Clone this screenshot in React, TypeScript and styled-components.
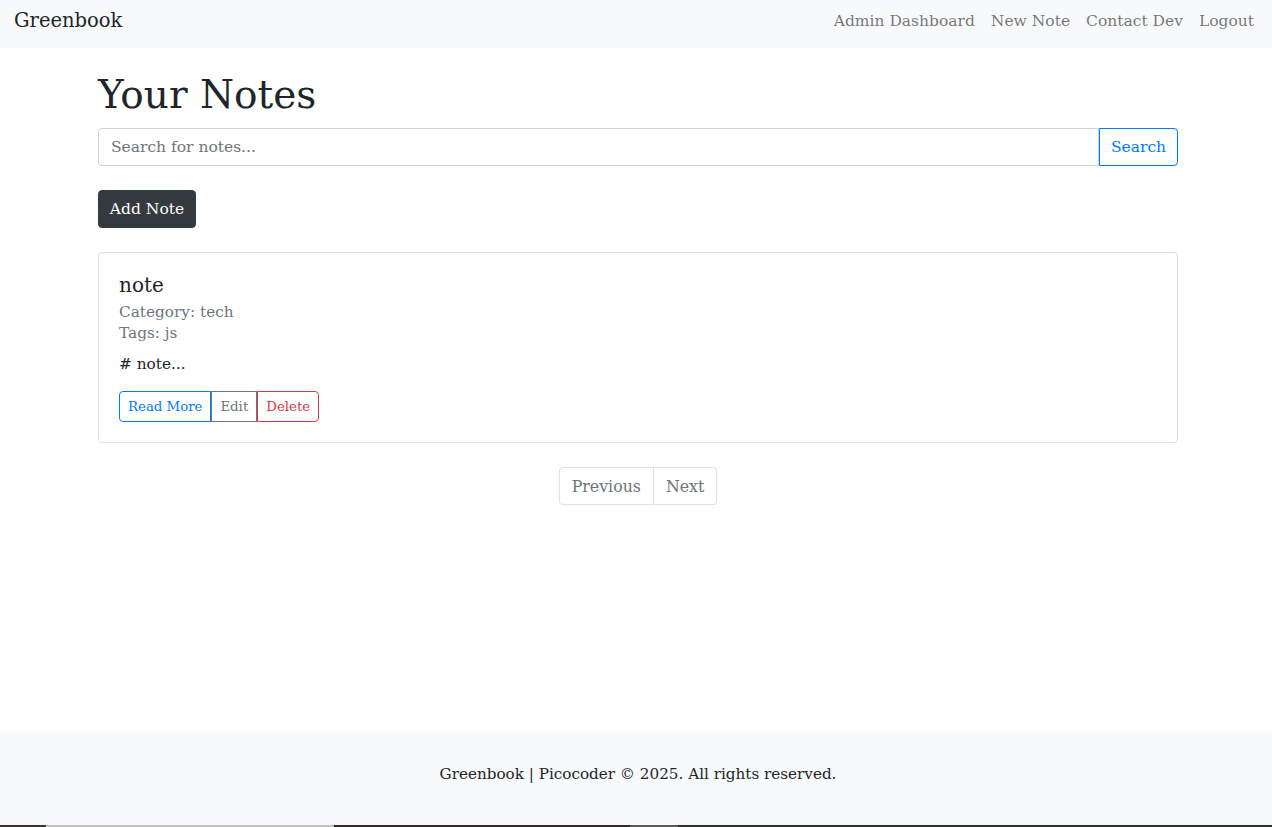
import React from "react";
import styled, { createGlobalStyle } from "styled-components";

const GlobalStyle = createGlobalStyle`
    * { box-sizing: border-box; }
    body {
        margin: 0;
        font-family: "DejaVu Serif", "Liberation Serif", serif;
        font-size: 16px;
        color: #212529;
        background: #fff;
    }
`;

const notes = [
    { id: 1, title: "note", category: "tech", tags: "js", preview: "# note..." },
];

const App = () => {
    return (
        <>
            <GlobalStyle />
            <StyledPage>
                <StyledNavbar>
                    <StyledBrand href="#">Greenbook</StyledBrand>
                    <StyledNavLinks>
                        <StyledNavLink href="#">Admin Dashboard</StyledNavLink>
                        <StyledNavLink href="#">New Note</StyledNavLink>
                        <StyledNavLink href="#">Contact Dev</StyledNavLink>
                        <StyledNavLink href="#">Logout</StyledNavLink>
                    </StyledNavLinks>
                </StyledNavbar>

                <StyledMain>
                    <StyledContainer>
                        <StyledTitle>Your Notes</StyledTitle>
                        <StyledSearch>
                            <StyledSearchInput placeholder="Search for notes..." />
                            <StyledSearchButton>Search</StyledSearchButton>
                        </StyledSearch>

                        <StyledAddButton>Add Note</StyledAddButton>

                        {notes.map((note) => (
                            <StyledCard key={note.id}>
                                <StyledCardTitle>{note.title}</StyledCardTitle>
                                <StyledMeta>Category: {note.category}</StyledMeta>
                                <StyledMeta>Tags: {note.tags}</StyledMeta>
                                <StyledPreview>{note.preview}</StyledPreview>
                                <StyledButtonGroup>
                                    <StyledSmallButton $color="#007bff">Read More</StyledSmallButton>
                                    <StyledSmallButton $color="#6c757d">Edit</StyledSmallButton>
                                    <StyledSmallButton $color="#dc3545">Delete</StyledSmallButton>
                                </StyledButtonGroup>
                            </StyledCard>
                        ))}

                        <StyledPagination>
                            <StyledPageLink>Previous</StyledPageLink>
                            <StyledPageLink>Next</StyledPageLink>
                        </StyledPagination>
                    </StyledContainer>
                </StyledMain>

                <StyledFooter>Greenbook | Picocoder © 2025. All rights reserved.</StyledFooter>
                <StyledStrip>
                    <StyledStripPart $w={46} $bg="#3a3431" />
                    <StyledStripPart $w={288} $bg="#c2c2c2" />
                    <StyledStripPart $w={296} $bg="#302a28" />
                    <StyledStripPart $w={48} $bg="#5c5a58" />
                    <StyledStripPart $w={594} $bg="#2f3325" />
                </StyledStrip>
            </StyledPage>
        </>
    );
};

const StyledPage = styled.div`
    display: flex;
    flex-direction: column;
    min-height: 100vh;
`;

const StyledNavbar = styled.nav`
    height: 48px;
    background: #f8f9fa;
    display: flex;
    align-items: center;
    justify-content: space-between;
    padding: 0 18px 7px 14px;
`;

const StyledBrand = styled.a`
    font-size: 19.5px;
    color: #212529;
    text-decoration: none;
`;

const StyledNavLinks = styled.div`
    display: flex;
    gap: 16px;
    padding-top: 1px;
`;

const StyledNavLink = styled.a`
    font-size: 15.5px;
    color: rgba(0, 0, 0, 0.55);
    text-decoration: none;
`;

const StyledMain = styled.main`
    flex: 1;
    padding-left: 4px;
`;

const StyledContainer = styled.div`
    width: 1080px;
    margin: 0 auto;
    padding-bottom: 24px;
`;

const StyledTitle = styled.h1`
    font-size: 39px;
    font-weight: 400;
    line-height: 48px;
    margin: 23px 0 9px;
`;

const StyledSearch = styled.div`
    display: flex;
    height: 38px;
`;

const StyledSearchInput = styled.input`
    flex: 1;
    font-family: inherit;
    font-size: 15.5px;
    padding: 0 12px;
    border: 1px solid #ced4da;
    border-radius: 4px 0 0 4px;
    color: #495057;
    outline: none;
    &::placeholder {
        color: #6c757d;
    }
`;

const StyledSearchButton = styled.button`
    font-family: inherit;
    font-size: 15.5px;
    width: 79px;
    color: #007bff;
    background: #fff;
    border: 1px solid #007bff;
    border-radius: 0 4px 4px 0;
`;

const StyledAddButton = styled.button`
    display: block;
    margin: 24px 0;
    height: 38px;
    width: 98px;
    font-family: inherit;
    font-size: 15.5px;
    color: #fff;
    background: #343a40;
    border: 1px solid #343a40;
    border-radius: 4px;
`;

const StyledCard = styled.div`
    border: 1px solid rgba(0, 0, 0, 0.125);
    border-radius: 4px;
    padding: 20px;
`;

const StyledCardTitle = styled.h5`
    font-size: 20px;
    font-weight: 400;
    line-height: 24px;
    margin: 0 0 5px;
`;

const StyledMeta = styled.div`
    font-size: 15.3px;
    line-height: 21px;
    color: #6c757d;
`;

const StyledPreview = styled.p`
    font-size: 15.3px;
    line-height: 24px;
    margin: 8px 0 15px;
`;

const StyledButtonGroup = styled.div`
    display: flex;
`;

const StyledSmallButton = styled.button<{ $color: string }>`
    height: 31px;
    padding: 0 8px;
    font-family: inherit;
    font-size: 13.3px;
    color: ${({ $color }) => $color};
    background: #fff;
    border: 1px solid ${({ $color }) => $color};
    border-radius: 0;
    &:first-child {
        border-radius: 4px 0 0 4px;
    }
    &:last-child {
        border-radius: 0 4px 4px 0;
    }
`;

const StyledPagination = styled.div`
    display: flex;
    justify-content: center;
    margin-top: 24px;
`;

const StyledPageLink = styled.a`
    height: 38px;
    padding: 0 12px;
    display: flex;
    align-items: center;
    font-size: 15.8px;
    color: #6c757d;
    border: 1px solid #dee2e6;
    &:first-child {
        border-radius: 4px 0 0 4px;
    }
    & + & {
        border-left: none;
        border-radius: 0 4px 4px 0;
    }
`;

const StyledFooter = styled.footer`
    height: 94px;
    background: #f8f9fa;
    display: flex;
    align-items: center;
    justify-content: center;
    padding: 0 0 8px 4px;
    font-size: 15.2px;
    color: #212529;
`;

const StyledStrip = styled.div`
    display: flex;
    height: 2px;
`;

const StyledStripPart = styled.div<{ $w: number; $bg: string }>`
    width: ${({ $w }) => $w}px;
    background: ${({ $bg }) => $bg};
`;

export default App;
